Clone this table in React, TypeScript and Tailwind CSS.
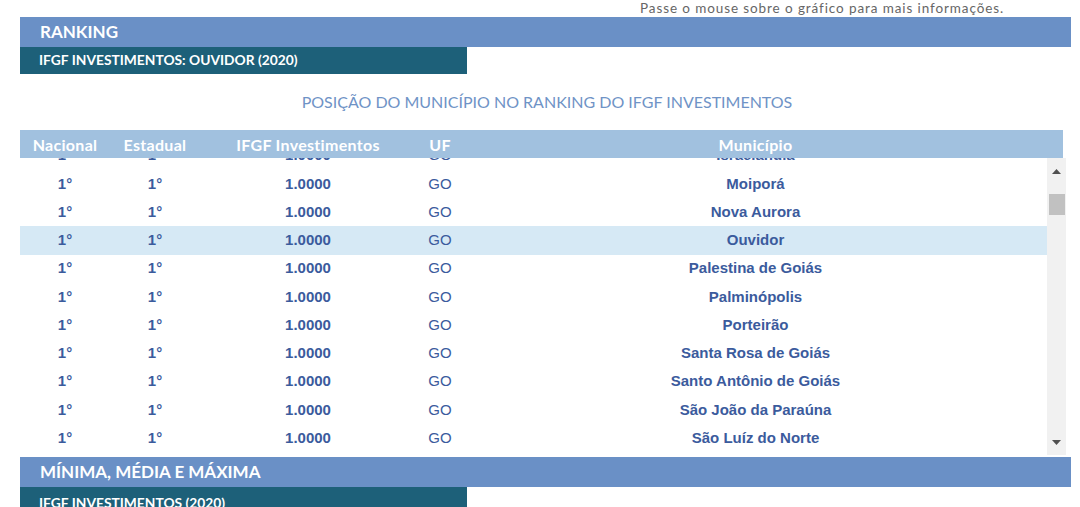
import React from "react";

const rows = [
  "Israelândia",
  "Moiporá",
  "Nova Aurora",
  "Ouvidor",
  "Palestina de Goiás",
  "Palminópolis",
  "Porteirão",
  "Santa Rosa de Goiás",
  "Santo Antônio de Goiás",
  "São João da Paraúna",
  "São Luíz do Norte",
  "São Miguel do Passa Quatro",
];

const head = "font-['Lato','Open_Sans',sans-serif]";
const cell = "font-['Liberation_Sans',Arial,sans-serif] font-bold text-[15px] text-[#3b5b9d]";

export default function App() {
  return (
    <div className="w-[1080px] h-[507px] overflow-hidden bg-white">
      <div className="h-[17px] pl-[640px]">
        <p className={`${head} text-[13.5px] leading-[16px] tracking-[0.9px] text-[#666]`}>Passe o mouse sobre o gráfico para mais informações.</p>
      </div>

      <div className="mx-[20px] w-[1051px]">
        {/* Ranking */}
        <div className="h-[30px] bg-[#6a90c6] flex items-center pl-[20px]">
          <span className={`${head} font-bold text-[17px] text-white`}>RANKING</span>
        </div>
        <div className="h-[27px] w-[447px] bg-[#1d6079] flex items-center pl-[19px]">
          <span className={`${head} font-bold text-[13.8px] text-white`}>IFGF INVESTIMENTOS: OUVIDOR (2020)</span>
        </div>

        <div className="h-[56px] flex items-center justify-center pl-[3px]">
          <span className={`${head} text-[16px] text-[#6f93c6]`}>POSIÇÃO DO MUNICÍPIO NO RANKING DO IFGF INVESTIMENTOS</span>
        </div>

        {/* Table header */}
        <div className={`${head} w-[1043px] h-[28px] bg-[#a1c1df] flex items-center pt-[2px] font-bold text-[16px] tracking-[0.3px] text-white`}>
          <div className="w-[90px] text-center">Nacional</div>
          <div className="w-[90px] text-center">Estadual</div>
          <div className="w-[216px] text-center">IFGF Investimentos</div>
          <div className="w-[48px] text-center">UF</div>
          <div className="w-[583px] text-center">Município</div>
        </div>

        {/* Table body */}
        <div className="w-[1046px] h-[297px] flex">
          <div className="w-[1027px] h-full overflow-hidden">
            <div className="-mt-[16.5px]">
              {rows.map((m) => (
                <div
                  key={m}
                  className={`${cell} h-[28.25px] flex items-center ${m === "Ouvidor" ? "bg-[#d6e9f5]" : ""}`}
                >
                  <div className="w-[90px] text-center">1°</div>
                  <div className="w-[90px] text-center">1°</div>
                  <div className="w-[216px] text-center">1.0000</div>
                  <div className="w-[48px] text-center font-normal">GO</div>
                  <div className="w-[583px] text-center">{m}</div>
                </div>
              ))}
            </div>
          </div>
          <div className="w-[19px] h-full bg-[#f1f1f1] flex flex-col items-center">
            <div className="h-[26px] flex items-center">
              <svg width="9" height="5" viewBox="0 0 9 5"><path d="M0 5 L4.5 0 L9 5 Z" fill="#505050" /></svg>
            </div>
            <div className="mt-[10px] w-[16px] h-[21px] bg-[#c1c1c1]" />
            <div className="flex-1" />
            <div className="h-[26px] flex items-center">
              <svg width="9" height="5" viewBox="0 0 9 5"><path d="M0 0 L9 0 L4.5 5 Z" fill="#505050" /></svg>
            </div>
          </div>
        </div>

        {/* Minima */}
        <div className="mt-[2px] h-[30px] bg-[#6a90c6] flex items-center pl-[20px]">
          <span className={`${head} font-bold text-[17px] text-white`}>MÍNIMA, MÉDIA E MÁXIMA</span>
        </div>
        <div className="h-[27px] w-[447px] bg-[#1d6079] flex items-start pl-[19px] pt-[8px]">
          <span className={`${head} font-bold text-[13.8px] leading-[16px] text-white`}>IFGF INVESTIMENTOS (2020)</span>
        </div>
      </div>
    </div>
  );
}
